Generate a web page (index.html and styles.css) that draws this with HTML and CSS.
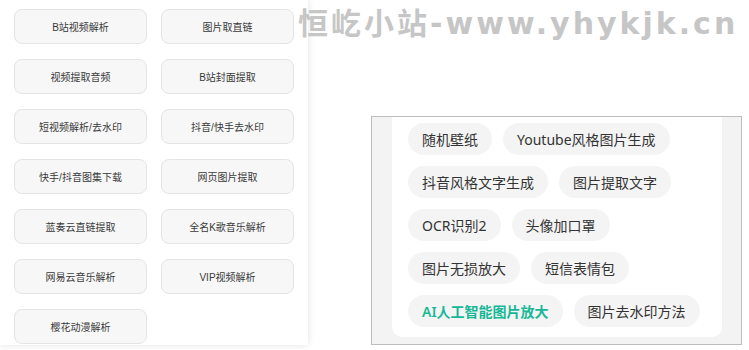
FILE: index.html
```html
<!DOCTYPE html>
<html>

<head>
  <title>工具箱</title>
  <link rel="stylesheet" href="styles.css">
</head>

<body>
  <section class="page">
    <div class="tools">
      <a class="tool" href="#">B站视频解析</a>
      <a class="tool" href="#">图片取直链</a>
      <a class="tool" href="#">视频提取音频</a>
      <a class="tool" href="#">B站封面提取</a>
      <a class="tool" href="#">短视频解析/去水印</a>
      <a class="tool" href="#">抖音/快手去水印</a>
      <a class="tool" href="#">快手/抖音图集下载</a>
      <a class="tool" href="#">网页图片提取</a>
      <a class="tool" href="#">蓝奏云直链提取</a>
      <a class="tool" href="#">全名K歌音乐解析</a>
      <a class="tool" href="#">网易云音乐解析</a>
      <a class="tool" href="#">VIP视频解析</a>
      <a class="tool" href="#">樱花动漫解析</a>
    </div>

    <div class="shot">
      <div class="card">
        <div class="chips">
          <a class="chip" href="#">随机壁纸</a>
          <a class="chip" href="#">Youtube风格图片生成</a>
        </div>
        <div class="chips">
          <a class="chip" href="#">抖音风格文字生成</a>
          <a class="chip" href="#">图片提取文字</a>
        </div>
        <div class="chips">
          <a class="chip" href="#">OCR识别2</a>
          <a class="chip" href="#">头像加口罩</a>
        </div>
        <div class="chips">
          <a class="chip" href="#">图片无损放大</a>
          <a class="chip" href="#">短信表情包</a>
        </div>
        <div class="chips">
          <a class="chip active" href="#">AI人工智能图片放大</a>
          <a class="chip" href="#">图片去水印方法</a>
        </div>
      </div>
    </div>

    <div class="watermark">恒屹小站-www.yhykjk.cn</div>
  </section>
</body>

</html>
```

FILE: styles.css
```css
* {
  margin: 0;
  padding: 0;
  box-sizing: border-box;
}
:root {
  --text-color: #333333;
  --chip-bg: #f4f4f4;
  --btn-bg: #f7f7f7;
  --green: #17b897;
}
body {
  background-color: #ffffff;
  font-family: "Noto Sans", "Noto Sans CJK SC", sans-serif;
}
a {
  text-decoration: none;
}

.page {
  position: relative;
  display: flex;
  align-items: flex-end;
  width: 749px;
  height: 350px;
  overflow: hidden;
}

/* left tool list */
.tools {
  display: grid;
  grid-template-columns: 133px 133px;
  column-gap: 14px;
  row-gap: 15px;
  align-content: start;
  width: 308px;
  height: 345px;
  margin-bottom: 5px;
  padding: 9px 14px 0;
  background-color: #ffffff;
  box-shadow: 0 0 7px rgba(0, 0, 0, 0.12);
}
.tool {
  display: flex;
  justify-content: center;
  align-items: center;
  height: 35px;
  background-color: var(--btn-bg);
  border: 1px solid #e4e4e4;
  border-radius: 8px;
  color: #3a3a3a;
  font-family: "Liberation Sans", "Noto Sans CJK SC", sans-serif;
  font-size: 10px;
}

/* right screenshot box */
.shot {
  width: 371px;
  height: 229px;
  margin-left: 63px;
  margin-bottom: 5px;
  padding: 0 19px 7px 20px;
  background-color: #f3f3f3;
  border: 1px solid #bdbdbd;
}
.card {
  display: flex;
  flex-direction: column;
  gap: 11px;
  height: 100%;
  padding: 6px 16px 0;
  background-color: #ffffff;
  border-radius: 0 0 10px 10px;
}
.chips {
  display: flex;
  gap: 11px;
}
.chip {
  display: flex;
  align-items: center;
  height: 32px;
  padding: 0 14px;
  background-color: var(--chip-bg);
  border-radius: 16px;
  color: var(--text-color);
  font-size: 14px;
}
.chip.active {
  color: var(--green);
  font-weight: 600;
}

.watermark {
  position: absolute;
  top: 4px;
  left: 298px;
  color: #c6c6c6;
  font-family: "DejaVu Sans", "Noto Sans CJK SC", sans-serif;
  font-weight: 700;
  font-size: 30px;
  line-height: 40px;
  letter-spacing: 3px;
  white-space: nowrap;
}
```
